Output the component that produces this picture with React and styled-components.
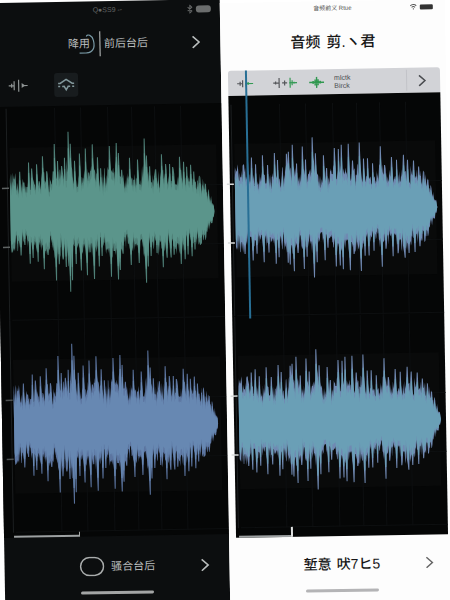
import styled, {createGlobalStyle} from 'styled-components';

const GlobalStyle = createGlobalStyle`
  * {
    box-sizing: border-box;
  }

  body {
    margin: 0;
    background: #fff;
    font-family: "Liberation Sans", "Noto Sans CJK SC", sans-serif;
  }

  button {
    display: flex;
    align-items: center;
    justify-content: center;
    padding: 0;
    border: 0;
    background: none;
    color: inherit;
    cursor: pointer;
  }
`;

// [position, height] of the loudest points
const VOICE = [
    [0, 34], [4, 22], [10, 43], [14, 32], [19, 52], [22, 46], [27, 50], [33, 58], [37, 43], [45, 70],
    [48, 53], [52, 48], [55, 56], [59, 82], [61, 70], [65, 53], [70, 60], [76, 65], [79, 41], [83, 69],
    [88, 56], [91, 45], [100, 67], [103, 40], [107, 70], [109, 60], [112, 43], [120, 55], [124, 33],
    [128, 53], [135, 74], [137, 57], [140, 46], [146, 43], [152, 58], [156, 48], [160, 48], [163, 45],
    [170, 55], [174, 50], [177, 45], [181, 47], [184, 40], [190, 37], [193, 30], [197, 15],
];

const MUSIC = [
    [0, 36], [6, 33], [9, 46], [13, 50], [17, 53], [21, 46], [28, 55], [33, 45], [40, 57], [43, 50],
    [52, 56], [54, 58], [58, 65], [62, 46], [68, 63], [71, 50], [78, 72], [81, 56], [89, 54], [92, 41],
    [97, 35], [100, 61], [104, 60], [107, 64], [114, 65], [118, 48], [125, 66], [129, 50], [133, 50],
    [138, 45], [146, 62], [150, 43], [157, 51], [162, 48], [169, 53], [173, 48], [179, 47], [184, 41],
    [189, 40], [193, 28], [197, 20],
];

const noise = (n) => {
    const v = Math.sin(n * 127.1 + 11.7) * 43758.5453;
    return v - Math.floor(v);
};

const wavePath = (peaks, length, seed, scale) => {
    const top = [];
    const bottom = [];
    for (let i = 0; i <= length * 2; i++) {
        const x = i / 2;
        const limit = Math.min(1, Math.sqrt((length - x) / 16));
        const swell = 17 + 4 * Math.sin(x / 9 + seed) + 3 * Math.sin(x / 3.7);
        let up = swell + noise(i + seed) * 24;
        let down = swell + noise(i + seed + 500) * 22;
        peaks.forEach(([at, height]) => {
            const d = Math.abs(x - at);
            if (d > 5) return;
            const skirt = height * (0.86 - d * 0.09);
            const h = d < 0.6 ? height : skirt * (0.6 + noise(i * 3 + seed) * 0.4);
            const low = d < 0.6 ? height : skirt * (0.6 + noise(i * 5 + seed) * 0.4);
            up = Math.max(up, h);
            down = Math.max(down, low * 0.95);
        });
        top.push(`${x},${-up * limit * scale}`);
        bottom.unshift(`${x},${down * limit * scale}`);
    }
    return `M${top.join('L')}L${bottom.join('L')}Z`;
};

const Page = styled.main`
  display: grid;
  grid-template-columns: 1fr 1fr;
  height: 100vh;
  padding-top: 3px;
  overflow: hidden;
`;

const Phone = styled.section`
  display: flex;
  flex-direction: column;
  height: calc(100vh + 5px);
  transform: rotate(-1deg);
  transform-origin: 0 50%;
  background: ${({$dark}) => ($dark ? '#0c0e0f' : '#fdfdfd')};
  color: ${({$dark}) => ($dark ? '#b9bdbd' : '#171717')};
`;

const Row = styled.div`
  display: grid;
  grid-template-columns: 1fr auto 1fr;
  align-items: center;
`;

const StatusBar = styled(Row)`
  height: ${({$tall}) => ($tall ? 18 : 14)}px;
  padding: 0 ${({$tall}) => ($tall ? 9 : 12)}px;
  color: ${({$tall}) => ($tall ? '#646666' : '#555')};
  font-size: ${({$tall}) => ($tall ? 7 : 6)}px;
  line-height: 8px;
`;

const StatusIcons = styled.div`
  display: flex;
  grid-column: 3;
  justify-content: flex-end;
  align-items: center;
  gap: 3px;
`;

const StatusText = styled.span`
  grid-column: 2;
`;

const Battery = styled.span`
  width: ${({$large}) => ($large ? 15 : 13)}px;
  height: ${({$large}) => ($large ? 7 : 5)}px;
  border-radius: ${({$large}) => ($large ? 3 : 1)}px;
  background: ${({$large}) => ($large ? '#6b6d6d' : '#333')};
`;

const Header = styled(Row)`
  height: ${({$tall}) => ($tall ? 54 : 48)}px;
  padding: 0 17px;
`;

const Title = styled.h1`
  display: flex;
  grid-column: 2;
  align-items: center;
  gap: ${({$small}) => ($small ? 4 : 6)}px;
  margin: 0;
  font-size: ${({$small}) => ($small ? 11 : 15)}px;
  font-weight: ${({$small}) => ($small ? 400 : 500)};
  line-height: 24px;
  white-space: nowrap;
`;

const Marked = styled.span`
  position: relative;
  padding-right: 5px;

  svg {
    position: absolute;
    right: 0;
    top: 2px;
  }
`;

const Divider = styled.span`
  width: 1px;
  height: 25px;
  background: #c4c8c8;
`;

const NextButton = styled.button`
  grid-column: 3;
  justify-self: end;
  width: 16px;
  height: 24px;
`;

const DarkTools = styled.div`
  display: flex;
  align-items: center;
  gap: 26px;
  height: 38px;
  padding: 0 12px 4px;
`;

const ToolButton = styled.button`
  width: ${({$wide}) => ($wide ? 24 : 20)}px;
  height: ${({$wide}) => ($wide ? 24 : 20)}px;
  border-radius: 3px;

  &[aria-pressed="true"] {
    background: #181c1e;
  }
`;

const LightTools = styled.div`
  display: flex;
  align-items: center;
  height: 25px;
  margin: 0 6px 0 7px;
  padding-left: 7px;
  border-radius: 3px 3px 0 0;
  background: #d2d3d7;
  color: #4a4c50;

  ${ToolButton}:nth-child(2) {
    margin-left: 18px;
    width: 24px;
  }

  ${ToolButton}:nth-child(3) {
    margin-left: 9px;
  }
`;

const ToolLabel = styled.span`
  margin-left: 8px;
  font-size: 7px;
  line-height: 8px;
`;

const ToolNext = styled.button`
  width: 34px;
  height: 21px;
  margin-left: auto;
  padding-right: 4px;
  border-left: 1px solid #c2c3c8;
`;

const Chart = styled.div`
  position: relative;
  display: flex;
  flex: 1;
  flex-direction: column;
  min-height: 0;
  margin: ${({$inset}) => ($inset ? '0 6px 0 7px' : '0')};
  padding-top: ${({$inset}) => ($inset ? 9 : 2)}px;
  background: #050606;
`;

const TrackSvg = styled.svg`
  display: block;
  flex: 1;
  width: 100%;
  min-height: 0;
  overflow: visible;
`;

const Playhead = styled.span`
  position: absolute;
  left: 17px;
  top: -25px;
  width: 2px;
  height: 56%;
  background: #286f95;
`;

const Ruler = styled.div`
  width: ${({$light}) => ($light ? 54 : 66)}px;
  height: ${({$light}) => ($light ? 10 : 5)}px;
  margin-left: ${({$light}) => ($light ? 3 : 10)}px;
  border-right: ${({$light}) => ($light ? '2px solid #e0e2e2' : '1px solid #a5a8a8')};
  background: linear-gradient(#9da1a2, #9da1a2) 0 100% / 100% 2px no-repeat;
`;

const Footer = styled.footer`
  display: flex;
  flex-direction: column;
  height: 70px;
  padding-top: ${({$dark}) => ($dark ? 6 : 4)}px;
`;

const FooterRow = styled(Row)`
  height: 48px;
  padding: 0 17px;
`;

const FooterText = styled.div`
  display: flex;
  grid-column: 2;
  align-items: center;
  gap: ${({$small}) => ($small ? 7 : 5)}px;
  font-size: ${({$small}) => ($small ? 11 : 14)}px;
  font-weight: ${({$small}) => ($small ? 400 : 500)};
  line-height: 20px;
  white-space: nowrap;
`;

const HomeBar = styled.span`
  align-self: center;
  width: 73px;
  height: 3px;
  margin-top: 1px;
  border-radius: 2px;
  background: ${({$dark}) => ($dark ? '#a3a5a5' : '#b4b4b6')};
`;

const Chevron = ({size = 13, color = 'currentColor'}) => (
    <svg width={size} height={size} viewBox="0 0 13 13" fill="none" stroke={color} strokeWidth="1.6">
        <path d="M3.2 0.8 L9.6 6.5 L3.2 12.2"/>
    </svg>
);

const Track = ({width, start, length, peaks, seed, color, spike, tick, label}) => (
    <TrackSvg viewBox={`0 0 ${width} 212`} preserveAspectRatio="none" role="img" aria-label={label}>
        <rect x={start} y="39" width={width - start - 6} height="134" fill="#090a0a"/>
        <g stroke="#0d0f10" strokeWidth="1">
            {[46, 72, 99, 123, 146, 172].map((x) => <path key={x} d={`M${start + x} 0V212`}/>)}
            <path d={`M${start} 79.5H${width}M${start} 138.5H${width}M${start} 211.5H${width}`}/>
        </g>
        <path d={`M${start - 2.5} 0V212`} stroke="#1c1f20" strokeWidth="1"/>
        <path d={`M${start - 8} 79.5H${start - 1}M${start - 8} 138.5H${start - 1}`} stroke={tick} strokeWidth="1.5"/>
        <g transform={`translate(${start} 106)`}>
            <path d={wavePath(peaks, length, seed, 1)} fill={spike}/>
            <path d={wavePath(peaks, length, seed, 0.8)} fill={color}/>
        </g>
    </TrackSvg>
);

const App = () => (
    <>
        <GlobalStyle/>
        <Page>
            <Phone $dark>
                <StatusBar $tall>
                    <StatusText>Q●SS9 --</StatusText>
                    <StatusIcons>
                        <svg width="6" height="9" viewBox="0 0 6 9" fill="none" stroke="currentColor">
                            <path d="M0.8 2.5L5 6.4L3 8.4V0.6L5 2.6L0.8 6.5"/>
                        </svg>
                        <Battery $large/>
                    </StatusIcons>
                </StatusBar>
                <Header>
                    <Title $small>
                        <Marked>
                            降用
                            <svg width="17" height="21" viewBox="0 0 17 21" fill="none" stroke="#7797a3" strokeWidth="1.2">
                                <path d="M8 3C9 0 14 2 15 7C17 15 14 19 8 19.5H1"/>
                            </svg>
                        </Marked>
                        <Divider/>
                        <span>前后台后</span>
                    </Title>
                    <NextButton aria-label="Next"><Chevron/></NextButton>
                </Header>
                <DarkTools>
                    <ToolButton aria-label="Split">
                        <svg width="20" height="14" viewBox="0 0 20 14" stroke="#8f9494" strokeWidth="1.2">
                            <path d="M0.5 7H6M6 2.5V11.5M10.5 1V13M14 7H19.5" fill="none"/>
                            <path d="M13.5 4.5L17 7L13.5 9.5Z" fill="#8f9494" stroke="none"/>
                            <path d="M3.5 5V9" fill="none"/>
                        </svg>
                    </ToolButton>
                    <ToolButton $wide aria-label="Fit height" aria-pressed="true">
                        <svg width="18" height="14" viewBox="0 0 18 14" fill="none" stroke="#82979b" strokeWidth="1.5">
                            <path d="M1 5.5H3L9 1.5L15 5.5H17M1 8.5H3M5 8.5H7L9 12L11 8.5H13M15 8.5H17"/>
                        </svg>
                    </ToolButton>
                </DarkTools>
                <Chart>
                    <Track width={225} start={12} length={204} peaks={VOICE} seed={3} color="#5b958b"
                           spike="#4f8078" tick="#5f6464" label="Green track"/>
                    <Track width={225} start={12} length={204} peaks={VOICE} seed={3} color="#6788b2"
                           spike="#5c75a0" tick="#4c5051" label="Blue track"/>
                    <Ruler/>
                </Chart>
                <Footer $dark>
                    <FooterRow>
                        <FooterText $small>
                            <svg width="25" height="20" viewBox="0 0 25 20" fill="none" stroke="#a9acac" strokeWidth="1.5">
                                <rect x="1" y="1" width="23" height="18" rx="9"/>
                            </svg>
                            <span>骚合台后</span>
                        </FooterText>
                        <NextButton aria-label="Next"><Chevron/></NextButton>
                    </FooterRow>
                    <HomeBar $dark/>
                </Footer>
            </Phone>

            <Phone>
                <StatusBar>
                    <StatusText>音频前义 Rtue</StatusText>
                    <StatusIcons>
                        <svg width="7" height="6" viewBox="0 0 7 6" fill="none" stroke="#555">
                            <path d="M0.5 2.2C2 0.4 5 0.4 6.5 2.2M1.8 3.7C2.8 2.8 4.2 2.8 5.2 3.7M3.5 4.6V6"/>
                        </svg>
                        <Battery/>
                    </StatusIcons>
                </StatusBar>
                <Header $tall>
                    <Title>
                        <span>音频</span>
                        <span>剪.ヽ君</span>
                    </Title>
                </Header>
                <LightTools>
                    <ToolButton aria-label="Trim start">
                        <svg width="18" height="12" viewBox="0 0 18 12" fill="none" stroke="#55575b" strokeWidth="1.2">
                            <path d="M1 6H7M4 4V8M6.5 2.5V9.5"/>
                            <path d="M10 3V9M12 4.5V7.5M9 6H17" stroke="#359a55"/>
                        </svg>
                    </ToolButton>
                    <ToolButton aria-label="Split and insert">
                        <svg width="24" height="12" viewBox="0 0 24 12" fill="none" stroke="#55575b" strokeWidth="1.2">
                            <path d="M0 6H6M2.5 4.5V7.5M6 1V11M9 6H14M11.5 3.5V8.5"/>
                            <path d="M17 1V11M19 3.5V8.5M21 5V7M16 6H24" stroke="#359a55"/>
                        </svg>
                    </ToolButton>
                    <ToolButton aria-label="Waveform">
                        <svg width="15" height="12" viewBox="0 0 15 12" stroke="#319850" strokeWidth="1.4">
                            <path d="M0 6H15M4 4.5V7.5M6 3V9M7.5 0.5V11.5M9 3V9M11 4.5V7.5"/>
                        </svg>
                    </ToolButton>
                    <ToolLabel>mlctk<br/>Birck</ToolLabel>
                    <ToolNext aria-label="More tools"><Chevron size={12}/></ToolNext>
                </LightTools>
                <Chart $inset>
                    <Track width={212} start={5} length={202} peaks={MUSIC} seed={8} color="#6a9fb6"
                           spike="#7089b2" tick="#d9dcdc" label="First track"/>
                    <Track width={212} start={5} length={202} peaks={MUSIC} seed={8} color="#6a9fb6"
                           spike="#7089b2" tick="#d9dcdc" label="Second track"/>
                    <Ruler $light/>
                    <Playhead/>
                </Chart>
                <Footer>
                    <FooterRow>
                        <FooterText>
                            <span>堑意</span>
                            <span>吠7ヒ5</span>
                        </FooterText>
                        <NextButton aria-label="Next"><Chevron size={12} color="#666"/></NextButton>
                    </FooterRow>
                    <HomeBar/>
                </Footer>
            </Phone>
        </Page>
    </>
);

export default App;
